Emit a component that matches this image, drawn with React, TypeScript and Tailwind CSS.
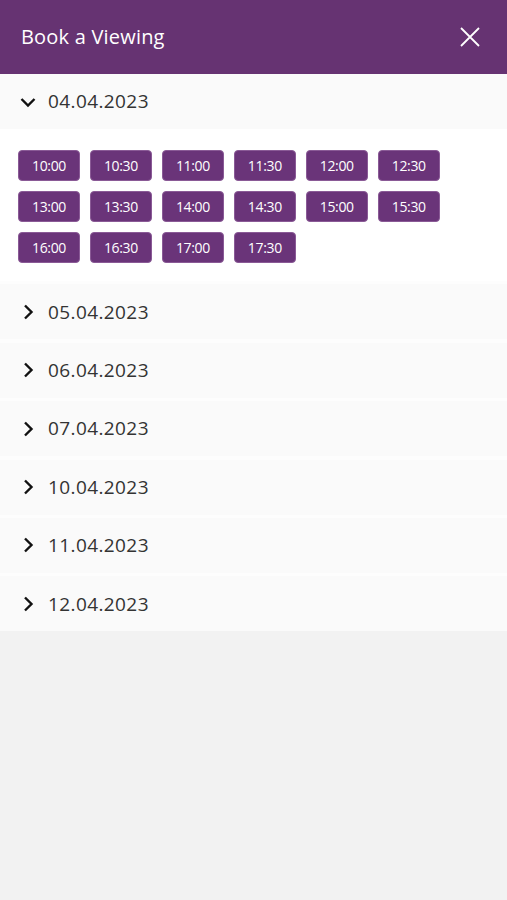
import { useState } from "react";

const dates = [
  "04.04.2023",
  "05.04.2023",
  "06.04.2023",
  "07.04.2023",
  "10.04.2023",
  "11.04.2023",
  "12.04.2023",
];

const slots = [
  "10:00", "10:30", "11:00", "11:30", "12:00", "12:30",
  "13:00", "13:30", "14:00", "14:30", "15:00", "15:30",
  "16:00", "16:30", "17:00", "17:30",
];

function Chevron({ open }: { open: boolean }) {
  return (
    <svg width="18" height="18" viewBox="0 0 18 18" className="shrink-0">
      {open ? (
        <path d="M2.5 6l6.5 6.5L15.5 6" fill="none" stroke="#111" strokeWidth="2.4" />
      ) : (
        <path d="M6 2.5l6.5 6.5L6 15.5" fill="none" stroke="#111" strokeWidth="2.4" />
      )}
    </svg>
  );
}

export default function App() {
  const [open, setOpen] = useState<string | null>(dates[0]);

  return (
    <div className="min-h-[900px] w-full bg-[#f2f2f2]" style={{ fontFamily: '"Open Sans", "Liberation Sans", sans-serif' }}>
      <header className="flex h-[74px] items-center justify-between bg-[#663372] pl-[21px] pr-[26px]">
        <h1 className="text-[20px] font-normal tracking-[0.2px] text-white">Book a Viewing</h1>
        <svg width="22" height="22" viewBox="0 0 22 22">
          <path d="M2 2l18 18M20 2L2 20" stroke="#fff" strokeWidth="1.8" />
        </svg>
      </header>

      <div className="flex flex-col gap-[3.4px] bg-[#fdfdfd]">
        {dates.map((d) => (
          <div key={d}>
            <button
              onClick={() => setOpen(open === d ? null : d)}
              className="flex h-[55px] w-full items-center gap-[11px] bg-[#fafafa] pl-[19px] text-left"
            >
              <Chevron open={open === d} />
              <span className="text-[19px] tracking-[0.4px] text-[#333]">{d}</span>
            </button>
            {open === d && (
              <div className="flex flex-wrap gap-x-[10px] gap-y-[10px] bg-white px-[18px] pb-[18px] pt-[21px]">
                {slots.map((s) => (
                  <span
                    key={s}
                    className="flex h-[31px] items-center rounded-[4px] border border-[#8a5a96] bg-[#6a3479] px-[13px] text-[14px] tracking-tight text-white"
                  >
                    {s}
                  </span>
                ))}
              </div>
            )}
          </div>
        ))}
      </div>
    </div>
  );
}
